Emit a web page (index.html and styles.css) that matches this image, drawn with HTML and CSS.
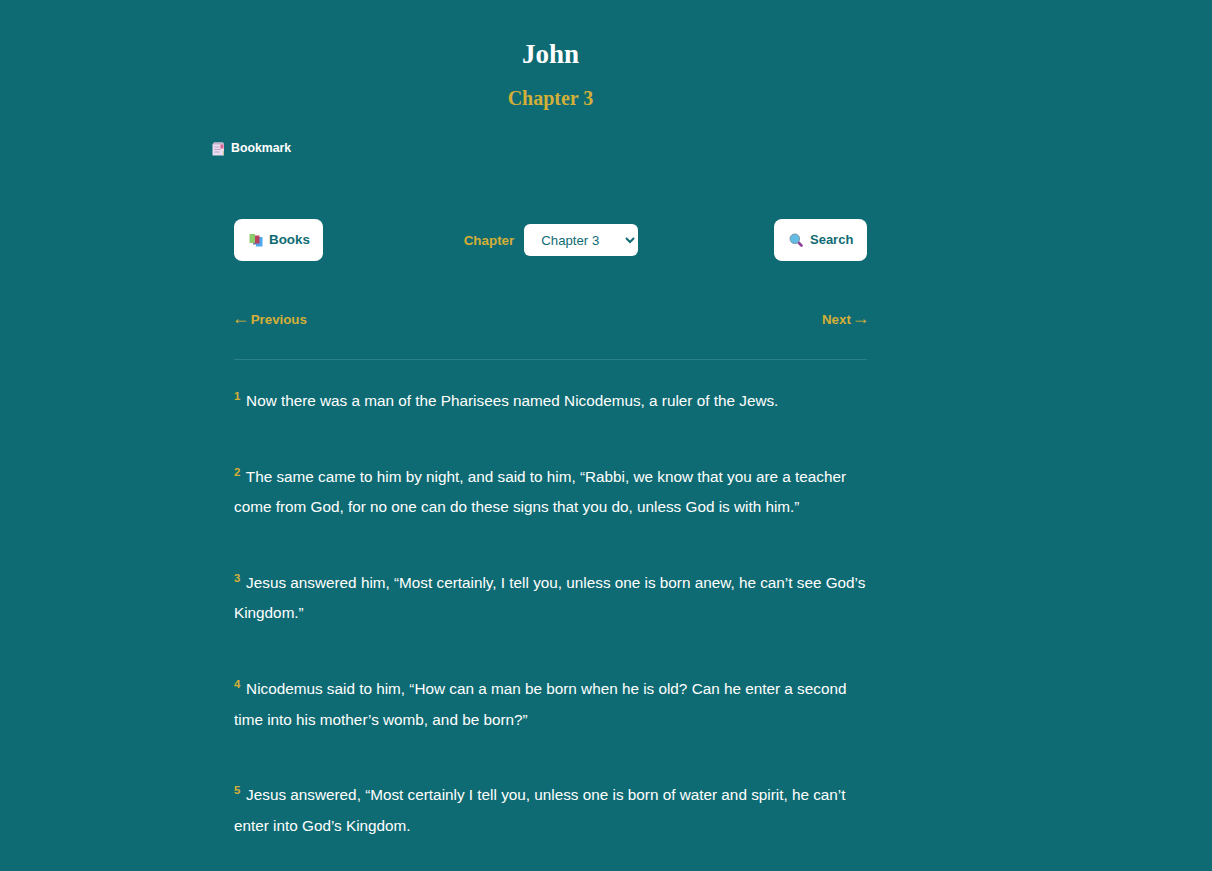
FILE: index.html
```html
<!DOCTYPE html>
<html lang="en">
<head>
<meta charset="utf-8">
<title>John 3</title>
<link rel="stylesheet" href="styles.css">
</head>
<body>
<div class="page">
  <header class="head">
    <h1>John</h1>
    <h2>Chapter 3</h2>
  </header>
  <button class="bookmark">
    <svg class="ico" viewBox="0 0 14 14"><path d="M1.500 2.500L3 0.500h9l1 2v11H1.500z" fill="#e9dcee"/><path d="M1.500 2.500L3 0.500h9l1 2z" fill="#c3b2cc"/><path d="M3.500 5h5M3.500 7.500h6M3.500 10h5" stroke="#c8a4c8" stroke-width="1"/><path d="M9.500 2.500h3v4.500l-1.500-1-1.500 1z" fill="#d8608c"/><path d="M12 9h1v4h-1z" fill="#c9bb8a"/></svg>
    Bookmark
  </button>
  <main class="reader">
    <div class="controls">
      <button class="btn">
        <svg class="ico" viewBox="0 0 14 14"><path d="M7 4h6.500v9.500H7z" fill="#4fa8ee"/><path d="M4 2.500h6.500V10.500H4z" fill="#b8405f"/><path d="M0.500 1h5.500v9H0.500z" fill="#8ccb6c"/><path d="M4 10h3.500v1.500H4z" fill="#7c6aa8"/></svg>
        Books
      </button>
      <label class="picker">
        <span>Chapter</span>
        <select><option>Chapter 3</option></select>
      </label>
      <button class="btn btn-search">
        <svg class="ico" viewBox="0 0 14 14"><path d="M9 9l3.500 3.500" stroke="#8b3f96" stroke-width="2.600" stroke-linecap="round"/><circle cx="5.800" cy="5.800" r="4.800" fill="#62bce6" stroke="#7a97a8" stroke-width="1"/></svg>
        Search
      </button>
    </div>
    <nav class="pager">
      <a class="pager-link"><span class="arrow arrow-back">←</span> Previous</a>
      <a class="pager-link">Next <span class="arrow arrow-next">→</span></a>
    </nav>
    <section class="verses">
      <p><sup>1</sup> Now there was a man of the Pharisees named Nicodemus, a ruler of the Jews.</p>
      <p><sup>2</sup> The same came to him by night, and said to him, “Rabbi, we know that you are a teacher come from God, for no one can do these signs that you do, unless God is with him.”</p>
      <p><sup>3</sup> Jesus answered him, “Most certainly, I tell you, unless one is born anew, he can’t see God’s Kingdom.”</p>
      <p><sup>4</sup> Nicodemus said to him, “How can a man be born when he is old? Can he enter a second time into his mother’s womb, and be born?”</p>
      <p><sup>5</sup> Jesus answered, “Most certainly I tell you, unless one is born of water and spirit, he can’t enter into God’s Kingdom.</p>
    </section>
  </main>
</div>
</body>
</html>
```

FILE: styles.css
```css
* { box-sizing: border-box; }
html, body { margin: 0; height: 871px; overflow: hidden; }
body { background: #0f6b73; color: #fff; font-family: "Liberation Sans", Arial, sans-serif; }
.page { width: 699px; margin: 0 auto 0 201px; padding: 0; }
.head { text-align: center; padding-top: 40px; }
h1 { margin: 0; font: bold 27px/29px "Liberation Serif", serif; color: #fff; }
h2 { margin: 18px 0 0; font: bold 20px/22px "Liberation Serif", serif; color: #d4af37; }
.bookmark { display: flex; align-items: center; gap: 6px; margin: 32px 0 0 10px; padding: 0; background: none; border: 0; color: #fff; font: bold 12.300px/15px "Liberation Sans", sans-serif; }
.ico { width: 14px; height: 14px; flex: none; }
.reader { padding: 0 33px; margin-top: 63px; }
.controls { display: flex; align-items: center; justify-content: space-between; height: 42px; }
.btn { display: flex; align-items: center; gap: 6px; height: 42px; width: 89px; padding: 0 0 0 15px; background: #fff; border: 0; border-radius: 8px; color: #0f6b73; font: bold 13.400px/16px "Liberation Sans", sans-serif; }
.btn-search { width: 93px; font-size: 13px; gap: 7px; }
.picker { display: flex; align-items: center; gap: 10px; margin-left: 5px; color: #d4af37; font: bold 13.400px/15px "Liberation Sans", sans-serif; }
select { width: 114px; height: 32px; padding: 0 4px 0 13px; background: #fff; border: 0; border-radius: 6px; color: #0f6b73; font: 13.200px "Liberation Sans", sans-serif; }
.pager { display: flex; justify-content: space-between; margin-top: 50px; padding-bottom: 30px; border-bottom: 1px solid #2b8088; color: #d4af37; font: bold 13.300px/18px "Liberation Sans", sans-serif; }
.pager-link { white-space: nowrap; }
.arrow { font-size: 18px; line-height: 0; }
.arrow-back { margin: 0 -2.500px 0 -2.500px; }
.arrow-next { margin: 0 -2.500px 0 -3px; }
.verses { margin-top: 26px; font-size: 15.300px; line-height: 30.400px; }
.verses p { margin: 0 0 45.400px; }
sup { margin-right: 1.500px; color: #d4af37; font-size: 11.400px; font-weight: bold; line-height: 0; }
```
